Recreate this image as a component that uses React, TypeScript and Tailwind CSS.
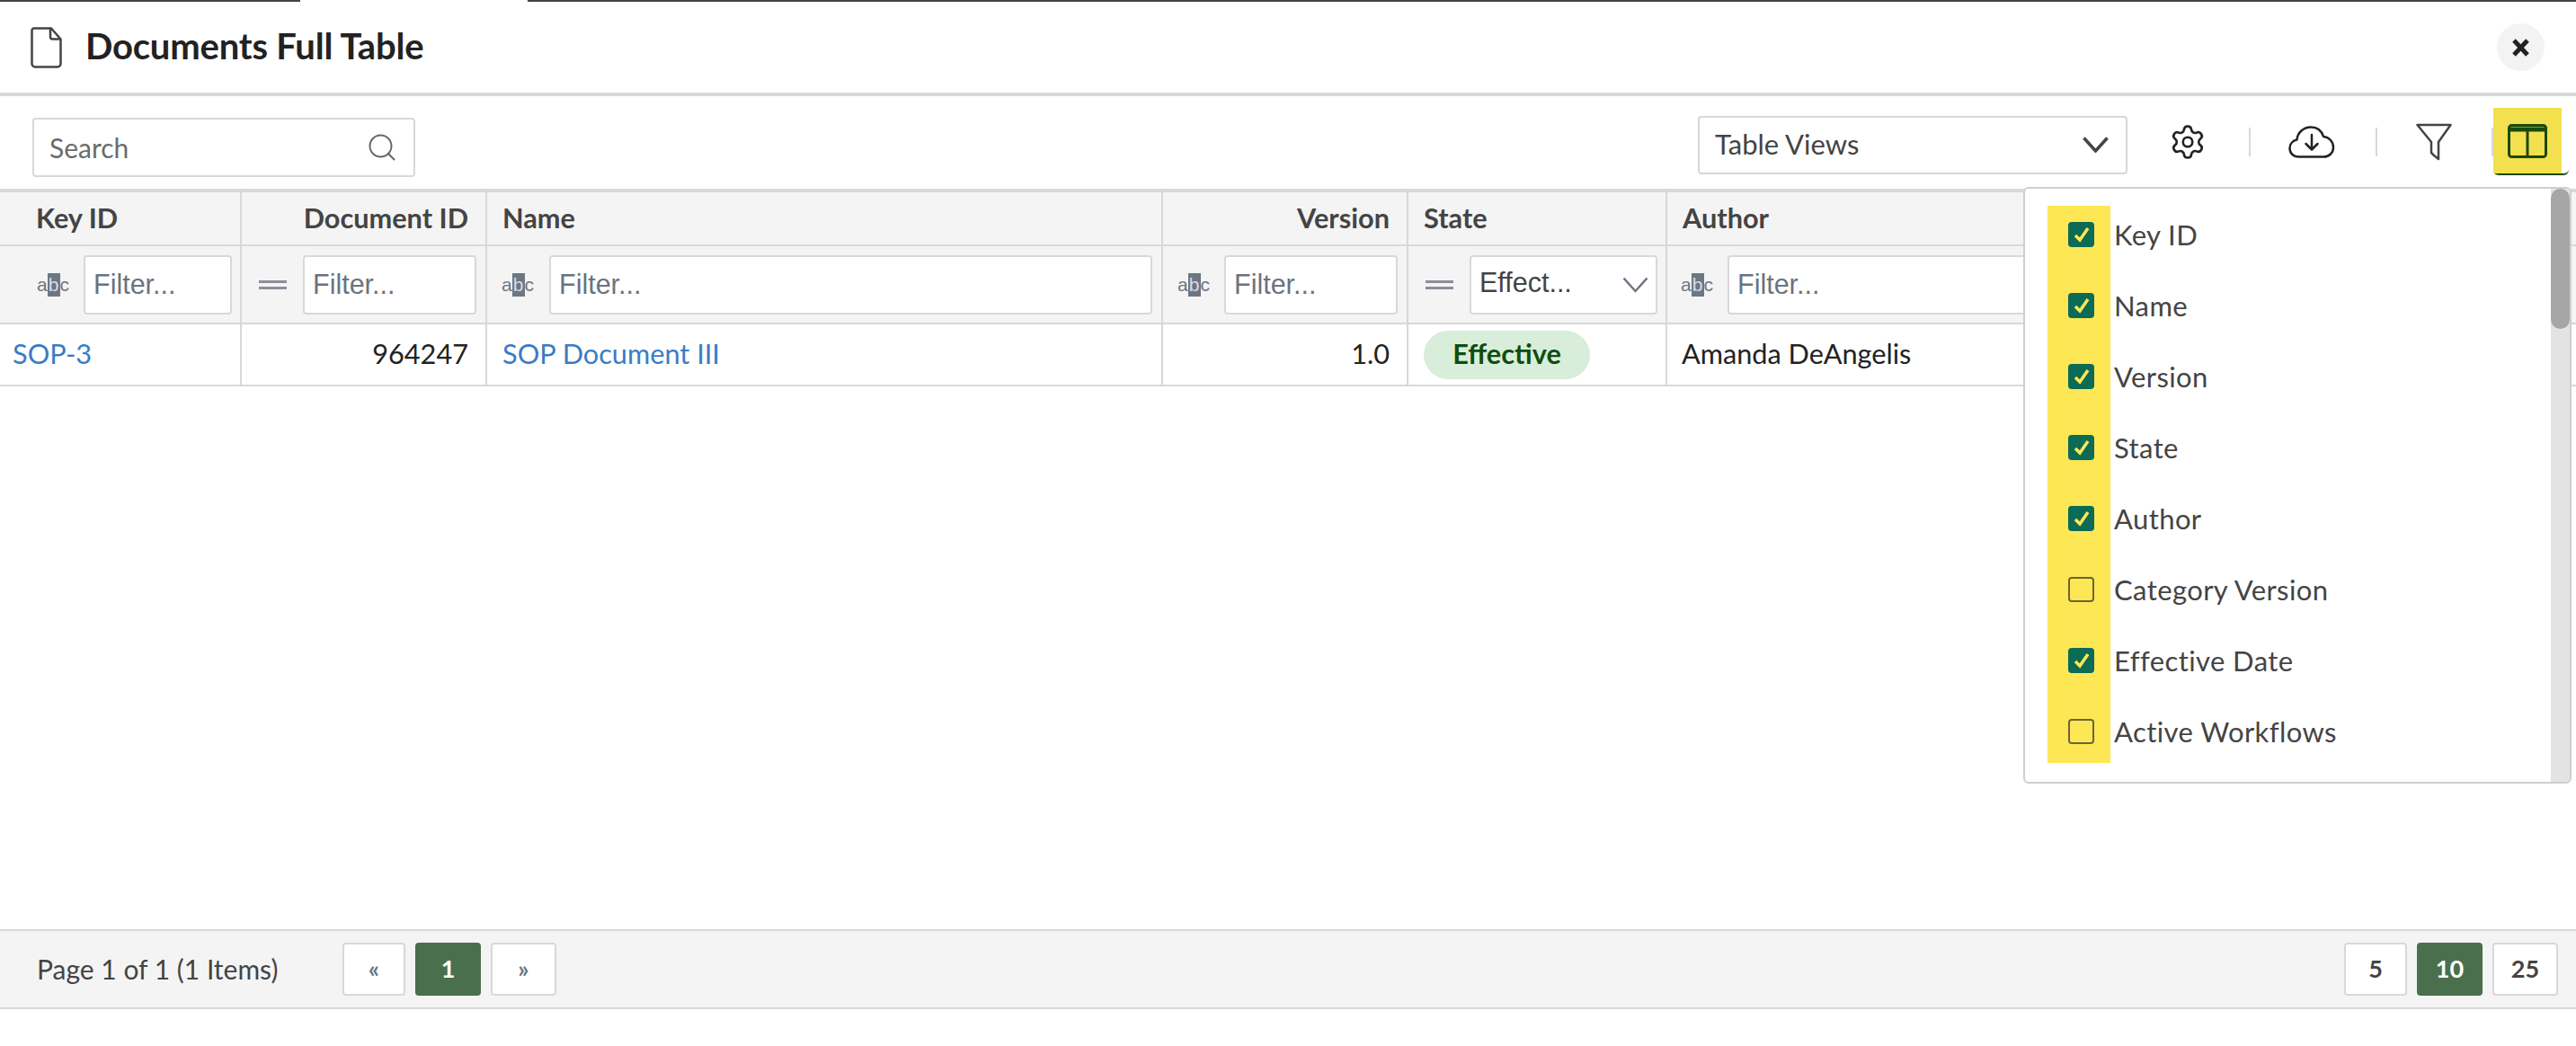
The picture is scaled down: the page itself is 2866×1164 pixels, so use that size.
import { Settings, Search } from "lucide-react";

const columns = [
  { label: "Key ID", width: "w-[269px]", right: false },
  { label: "Document ID", width: "w-[273px]", right: true },
  { label: "Name", width: "w-[752px]", right: false },
  { label: "Version", width: "w-[273px]", right: true },
  { label: "State", width: "w-[288px]", right: false },
];

const pickerItems = [
  { label: "Key ID", checked: true },
  { label: "Name", checked: true },
  { label: "Version", checked: true },
  { label: "State", checked: true },
  { label: "Author", checked: true },
  { label: "Category Version", checked: false },
  { label: "Effective Date", checked: true },
  { label: "Active Workflows", checked: false },
];

const AbcIcon = () => (
  <span className="flex h-[26px] w-[36px] shrink-0 items-center justify-center font-['Liberation_Sans',sans-serif] text-[21px] leading-none text-[#6c7685]">
    a
    <span className="flex h-[26px] w-[14px] items-center justify-center bg-[#6c7685] text-[#d8dbe0]">b</span>
    c
  </span>
);

const EqualsIcon = () => (
  <span className="flex w-[31px] shrink-0 flex-col gap-[4px]">
    <span className="h-[3px] bg-[#8a8f98]" />
    <span className="h-[3px] bg-[#8a8f98]" />
  </span>
);

const FilterInput = ({ className }: { className: string }) => (
  <input
    placeholder="Filter..."
    className={`h-[66px] rounded-[4px] border-2 border-[#d8d8d8] bg-white pl-[9px] font-['Liberation_Sans',sans-serif] text-[30.5px] outline-none placeholder:text-[#6c7280] ${className}`}
  />
);

const PageButton = ({ label, active, wide, muted }: { label: string; active?: boolean; wide?: boolean; muted?: boolean }) => (
  <button
    className={`flex h-[59px] items-center justify-center rounded-[4px] text-[27px] font-bold ${wide ? "w-[70px]" : "w-[73px]"} ${
      active ? "bg-[#4a6f4d] text-white" : "border-2 border-[#d8d8d8] bg-white"
    } ${muted ? "text-[#6c7685]" : active ? "" : "text-[#444444]"}`}
  >
    {label}
  </button>
);

const Divider = () => <span className="h-[32px] w-[2px] bg-[#d8d8d8]" />;

const Chevron = ({ stroke, strokeWidth }: { stroke: string; strokeWidth: number }) => (
  <svg width="29" height="18" viewBox="0 0 29 18" fill="none" stroke={stroke} strokeWidth={strokeWidth}>
    <path d="M1.500 1.500L14.500 16 27.500 1.500" />
  </svg>
);

export default function App() {
  return (
    <div className="relative flex h-[1164px] w-[2866px] flex-col overflow-hidden bg-white font-['Lato',sans-serif] text-[#444444]">
      {/* Top strip */}
      <div className="flex h-[2px] shrink-0">
        <div className="w-[334px] bg-[#444444]" />
        <div className="w-[253px]" />
        <div className="flex-1 bg-[#444444]" />
      </div>

      {/* Title bar */}
      <div className="flex h-[105px] shrink-0 items-center border-b-4 border-[#d8d8d8] pl-[34px] pr-[35px]">
        <svg width="35" height="46" viewBox="0 0 35 46" fill="none" stroke="#444444" strokeWidth="2.5" strokeLinejoin="round">
          <path d="M4 1.500h19l10.500 12V41a3.500 3.500 0 0 1-3.500 3.500H5A3.500 3.500 0 0 1 1.500 41V4A2.500 2.500 0 0 1 4 1.500z" />
          <path d="M22 1.500V11a2.500 2.500 0 0 0 2.500 2.500h9" />
        </svg>
        <h1 className="-mt-[4px] ml-[26px] text-[40px] font-bold tracking-[-0.2px] text-[#222222]">Documents Full Table</h1>
        <button className="ml-auto flex h-[53px] w-[53px] items-center justify-center rounded-full bg-[#f3f3f3]">
          <svg width="21" height="20" viewBox="0 0 21 20" stroke="#222222" strokeWidth="5">
            <path d="M3 2l15 16M18 2L3 18" />
          </svg>
        </button>
      </div>

      {/* Toolbar */}
      <div className="flex h-[103px] shrink-0 items-start justify-between pl-[36px] pr-[8px]">
        <div className="mt-[24px] flex h-[66px] w-[426px] items-center justify-between rounded-[4px] border-2 border-[#d8d8d8] pl-[17px] pr-[17px]">
          <span className="text-[30px] text-[#6b6b6b]">Search</span>
          <Search size={36} strokeWidth={1.3} className="text-[#666666]" />
        </div>

        <div className="mt-[13px] flex items-center">
          <div className="mt-[7px] flex h-[65px] w-[478px] items-center justify-between rounded-[4px] border-2 border-[#d8d8d8] pl-[17px] pr-[19px]">
            <span className="-mt-[2px] text-[31px]">Table Views</span>
            <Chevron stroke="#444444" strokeWidth={3.5} />
          </div>
          <Settings size={42} strokeWidth={1.5} className="ml-[46px] text-[#222222]" />
          <span className="ml-[47px] flex"><Divider /></span>
          <svg className="ml-[42px]" width="52" height="36" viewBox="0 0 52 36" fill="none" stroke="#222222" strokeWidth="2.5" strokeLinecap="round" strokeLinejoin="round">
            <path d="M12 34.500C5 34.500 1.500 30 1.500 25c0-5 3.500-8.500 8-9.500C10 7.500 17 1.500 25 1.500c7 0 12 4 14 10.500 6 .5 11 5.500 11 12 0 6-4.500 10.500-11 10.500z" />
            <path d="M26 10v16M19.500 20l6.500 6.500 6.500-6.500" />
          </svg>
          <span className="ml-[45px] flex"><Divider /></span>
          <svg className="ml-[43px]" width="40" height="42" viewBox="0 0 40 42" fill="none" stroke="#444444" strokeWidth="2.5" strokeLinejoin="round">
            <path d="M1.500 2h37L25 21v19l-5-4-3-3V21z" />
          </svg>
          <span className="ml-[44px] flex"><Divider /></span>
          <button className="flex h-[75px] w-[84px] items-center rounded-b-[6px] border-b-2 border-[#1a4a0b] bg-white">
            <span className="flex h-full w-[76px] items-center justify-center bg-[#f3e04f]">
              <svg width="44" height="38" viewBox="0 0 44 38" fill="none" stroke="#1a4a0b" strokeWidth="3">
                <rect x="1.500" y="1.500" width="41" height="35" rx="3" />
                <path d="M1.500 6h41" strokeWidth="5" />
                <path d="M22 4v32" />
              </svg>
            </span>
          </button>
        </div>
      </div>

      {/* Table */}
      <div className="shrink-0 border-t-4 border-[#d8d8d8]">
        <div className="flex h-[60px] items-center border-b-2 border-[#d8d8d8] bg-[#f4f4f4] text-[30.7px] font-bold">
          {columns.map((col) => (
            <div
              key={col.label}
              className={`flex h-full items-center border-r-2 border-[#d8d8d8] ${col.width} ${
                col.right ? "justify-end pr-[19px]" : col.label === "Key ID" ? "pl-[40px]" : "pl-[17px]"
              }`}
            >
              {col.label}
            </div>
          ))}
          <div className="pl-[17px]">Author</div>
        </div>

        <div className="flex h-[87px] items-center border-b-2 border-[#d8d8d8] bg-[#f4f4f4]">
          <div className="flex h-full w-[269px] items-center border-r-2 border-[#d8d8d8] pl-[41px]">
            <AbcIcon />
            <FilterInput className="ml-[16px] w-[165px]" />
          </div>
          <div className="flex h-full w-[273px] items-center border-r-2 border-[#d8d8d8] pl-[19px]">
            <EqualsIcon />
            <FilterInput className="ml-[18px] w-[193px]" />
          </div>
          <div className="flex h-full w-[752px] items-center border-r-2 border-[#d8d8d8] pl-[16px]">
            <AbcIcon />
            <FilterInput className="ml-[17px] w-[671px]" />
          </div>
          <div className="flex h-full w-[273px] items-center border-r-2 border-[#d8d8d8] pl-[16px]">
            <AbcIcon />
            <FilterInput className="ml-[16px] w-[193px]" />
          </div>
          <div className="flex h-full w-[288px] items-center border-r-2 border-[#d8d8d8] pl-[19px]">
            <EqualsIcon />
            <div className="ml-[18px] flex h-[66px] w-[209px] items-center justify-between rounded-[4px] border-2 border-[#d8d8d8] bg-white pl-[9px] pr-[8px] font-['Liberation_Sans',sans-serif] text-[30.5px]">
              <span className="-mt-[4px]">Effect...</span>
              <Chevron stroke="#6c7280" strokeWidth={2.5} />
            </div>
          </div>
          <div className="flex h-full flex-1 items-center pl-[15px]">
            <AbcIcon />
            <FilterInput className="ml-[16px] w-[600px]" />
          </div>
        </div>

        <div className="flex h-[69px] items-center border-b-2 border-[#d8d8d8] text-[30.7px] text-[#222222]">
          <div className="flex h-full w-[269px] items-center border-r-2 border-[#d8d8d8] pl-[14px] text-[#3b7cc4]">SOP-3</div>
          <div className="flex h-full w-[273px] items-center justify-end border-r-2 border-[#d8d8d8] pr-[19px]">964247</div>
          <div className="flex h-full w-[752px] items-center border-r-2 border-[#d8d8d8] pl-[17px] text-[#3b7cc4]">SOP Document III</div>
          <div className="flex h-full w-[273px] items-center justify-end border-r-2 border-[#d8d8d8] pr-[19px]">1.0</div>
          <div className="flex h-full w-[288px] items-center border-r-2 border-[#d8d8d8] pl-[17px]">
            <span className="flex h-[54px] w-[185px] items-center justify-center rounded-full bg-[#d9eeda] font-bold text-[#0f4d12]">Effective</span>
          </div>
          <div className="pl-[16px]">Amanda DeAngelis</div>
        </div>
      </div>

      <div className="flex-1" />

      {/* Pagination */}
      <div className="flex h-[89px] shrink-0 items-center border-y-2 border-[#d8d8d8] bg-[#f4f4f4] pl-[41px] pr-[20px]">
        <span className="w-[340px] text-[30px]">Page 1 of 1 (1 Items)</span>
        <div className="flex gap-[11px]">
          <PageButton label="«" wide muted />
          <PageButton label="1" active />
          <PageButton label="»" muted />
        </div>
        <div className="ml-auto flex gap-[11px]">
          <PageButton label="5" wide />
          <PageButton label="10" active />
          <PageButton label="25" />
        </div>
      </div>
      <div className="h-[41px] shrink-0" />

      {/* Column picker popover */}
      <div className="absolute left-[2251px] top-[208px] flex h-[664px] w-[610px] overflow-hidden rounded-[6px] border-2 border-[#cfcfcf] bg-white">
        <ul className="flex-1 pl-[25px] pt-[19px]">
          {pickerItems.map((item) => (
            <li key={item.label} className="flex h-[79px] last:h-[67px]">
              <div className="w-[70px] bg-[#fde755] pl-[23px] pt-[18px]">
                {item.checked ? (
                  <span className="flex h-[28px] w-[29px] items-center justify-center rounded-[4px] bg-[#0b6b55]">
                    <svg width="20" height="20" viewBox="0 0 20 20" fill="none" stroke="#fde755" strokeWidth="3.500">
                      <path d="M3 11l5 5L17 3" />
                    </svg>
                  </span>
                ) : (
                  <span className="block h-[28px] w-[29px] rounded-[4px] border-2 border-[#6b6534]" />
                )}
              </div>
              <span className="ml-[4px] mt-[14px] text-[31px] leading-[36px] tracking-[0.4px]">{item.label}</span>
            </li>
          ))}
        </ul>
        <div className="w-[21px] shrink-0 bg-[#e3e3e3]">
          <div className="h-[156px] rounded-full bg-[#a6a6a6]" />
        </div>
      </div>
    </div>
  );
}
